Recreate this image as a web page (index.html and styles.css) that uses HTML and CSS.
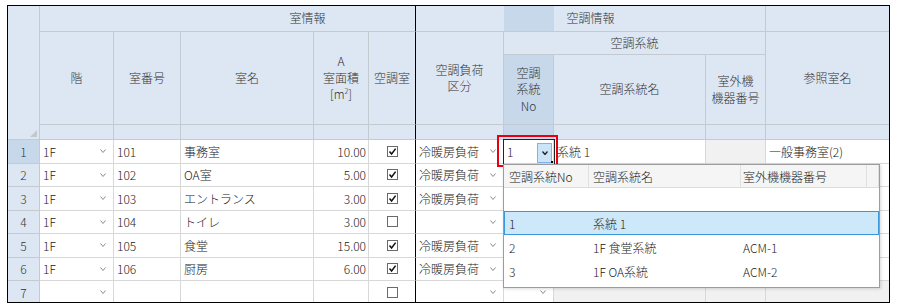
FILE: index.html
```html
<!DOCTYPE html>
<html lang="ja">
<head>
  <meta charset="UTF-8">
  <title>室情報 / 空調情報</title>
  <link rel="stylesheet" href="styles.css">
</head>
<body>
<div class="sheet">
  <div class="grid">
    <!-- header band -->
    <div class="h h-corner"></div>
    <div class="h h-room">室情報</div>
    <div class="h h-ac">空調情報</div>
    <div class="h h-reftop"></div>

    <div class="h h-floor">階</div>
    <div class="h h-no">室番号</div>
    <div class="h h-name">室名</div>
    <div class="h h-area"><span>A<br>室面積<br>[m<sup>2</sup>]</span></div>
    <div class="h h-aircon">空調室</div>
    <div class="h h-load"><span>空調負荷<br>区分</span></div>
    <div class="h h-sys">空調系統</div>
    <div class="h h-ref">参照室名</div>
    <div class="h h-sysno"><span>空調<br>系統<br>No</span></div>
    <div class="h h-sysname">空調系統名</div>
    <div class="h h-outdoor"><span>室外機<br>機器番号</span></div>

    <!-- filter row -->
    <div class="h f"></div>
    <div class="h f"></div>
    <div class="h f"></div>
    <div class="h f"></div>
    <div class="h f bk"></div>
    <div class="h f"></div>
    <div class="h f sel"></div>
    <div class="h f"></div>
    <div class="h f"></div>
    <div class="h f last"></div>

    <!-- rows -->
    <div class="row">
      <div class="c rh cur">1</div>
      <div class="c dd">1F<svg class="chev" viewBox="0 0 6 4"><path d="M.5.5 3 3.5 5.5.5"/></svg></div>
      <div class="c">101</div>
      <div class="c">事務室</div>
      <div class="c num">10.00</div>
      <div class="c chk"><svg class="box" viewBox="0 0 11 11"><rect x=".5" y=".5" width="10" height="10"/><path d="M2.5 5.5 4.6 8 8.6 2.6"/></svg></div>
      <div class="c dd">冷暖房負荷<svg class="chev" viewBox="0 0 6 4"><path d="M.5.5 3 3.5 5.5.5"/></svg></div>
      <div class="c edit">1<span class="drop-btn"><svg viewBox="0 0 6 4"><path d="M.5.5 3 3.5 5.5.5"/></svg></span></div>
      <div class="c">系統 1</div>
      <div class="c ro"></div>
      <div class="c">一般事務室(2)</div>
    </div>
    <div class="row">
      <div class="c rh">2</div>
      <div class="c dd">1F<svg class="chev" viewBox="0 0 6 4"><path d="M.5.5 3 3.5 5.5.5"/></svg></div>
      <div class="c">102</div>
      <div class="c">OA室</div>
      <div class="c num">5.00</div>
      <div class="c chk"><svg class="box" viewBox="0 0 11 11"><rect x=".5" y=".5" width="10" height="10"/><path d="M2.5 5.5 4.6 8 8.6 2.6"/></svg></div>
      <div class="c dd">冷暖房負荷<svg class="chev" viewBox="0 0 6 4"><path d="M.5.5 3 3.5 5.5.5"/></svg></div>
      <div class="c"></div>
      <div class="c"></div>
      <div class="c ro"></div>
      <div class="c"></div>
    </div>
    <div class="row">
      <div class="c rh">3</div>
      <div class="c dd">1F<svg class="chev" viewBox="0 0 6 4"><path d="M.5.5 3 3.5 5.5.5"/></svg></div>
      <div class="c">103</div>
      <div class="c">エントランス</div>
      <div class="c num">3.00</div>
      <div class="c chk"><svg class="box" viewBox="0 0 11 11"><rect x=".5" y=".5" width="10" height="10"/><path d="M2.5 5.5 4.6 8 8.6 2.6"/></svg></div>
      <div class="c dd">冷暖房負荷<svg class="chev" viewBox="0 0 6 4"><path d="M.5.5 3 3.5 5.5.5"/></svg></div>
      <div class="c"></div>
      <div class="c"></div>
      <div class="c ro"></div>
      <div class="c"></div>
    </div>
    <div class="row">
      <div class="c rh">4</div>
      <div class="c dd">1F<svg class="chev" viewBox="0 0 6 4"><path d="M.5.5 3 3.5 5.5.5"/></svg></div>
      <div class="c">104</div>
      <div class="c">トイレ</div>
      <div class="c num">3.00</div>
      <div class="c chk"><svg class="box" viewBox="0 0 11 11"><rect x=".5" y=".5" width="10" height="10"/></svg></div>
      <div class="c dd"><span></span><svg class="chev" viewBox="0 0 6 4"><path d="M.5.5 3 3.5 5.5.5"/></svg></div>
      <div class="c"></div>
      <div class="c"></div>
      <div class="c ro"></div>
      <div class="c"></div>
    </div>
    <div class="row">
      <div class="c rh">5</div>
      <div class="c dd">1F<svg class="chev" viewBox="0 0 6 4"><path d="M.5.5 3 3.5 5.5.5"/></svg></div>
      <div class="c">105</div>
      <div class="c">食堂</div>
      <div class="c num">15.00</div>
      <div class="c chk"><svg class="box" viewBox="0 0 11 11"><rect x=".5" y=".5" width="10" height="10"/><path d="M2.5 5.5 4.6 8 8.6 2.6"/></svg></div>
      <div class="c dd">冷暖房負荷<svg class="chev" viewBox="0 0 6 4"><path d="M.5.5 3 3.5 5.5.5"/></svg></div>
      <div class="c"></div>
      <div class="c"></div>
      <div class="c ro"></div>
      <div class="c"></div>
    </div>
    <div class="row">
      <div class="c rh">6</div>
      <div class="c dd">1F<svg class="chev" viewBox="0 0 6 4"><path d="M.5.5 3 3.5 5.5.5"/></svg></div>
      <div class="c">106</div>
      <div class="c">厨房</div>
      <div class="c num">6.00</div>
      <div class="c chk"><svg class="box" viewBox="0 0 11 11"><rect x=".5" y=".5" width="10" height="10"/><path d="M2.5 5.5 4.6 8 8.6 2.6"/></svg></div>
      <div class="c dd">冷暖房負荷<svg class="chev" viewBox="0 0 6 4"><path d="M.5.5 3 3.5 5.5.5"/></svg></div>
      <div class="c"></div>
      <div class="c"></div>
      <div class="c ro"></div>
      <div class="c"></div>
    </div>
    <div class="row">
      <div class="c rh">7</div>
      <div class="c dd"><span></span><svg class="chev" viewBox="0 0 6 4"><path d="M.5.5 3 3.5 5.5.5"/></svg></div>
      <div class="c"></div>
      <div class="c"></div>
      <div class="c num"></div>
      <div class="c chk"><svg class="box" viewBox="0 0 11 11"><rect x=".5" y=".5" width="10" height="10"/></svg></div>
      <div class="c dd"><span></span><svg class="chev" viewBox="0 0 6 4"><path d="M.5.5 3 3.5 5.5.5"/></svg></div>
      <div class="c dd"><span></span><svg class="chev" viewBox="0 0 6 4"><path d="M.5.5 3 3.5 5.5.5"/></svg></div>
      <div class="c ro"></div>
      <div class="c ro"></div>
      <div class="c ro"></div>
    </div>
  </div>

  <!-- red marker round the edited cell -->
  <div class="mark"></div>

  <!-- open dropdown of 空調系統No -->
  <div class="popup">
    <div class="pop-row pop-head"><span>空調系統No</span><span>空調系統名</span><span>室外機機器番号</span><span></span></div>
    <div class="pop-row blank"><span></span><span></span><span></span><span></span></div>
    <div class="pop-row active"><span>1</span><span>系統 1</span><span></span><span></span></div>
    <div class="pop-row"><span>2</span><span>1F 食堂系統</span><span>ACM-1</span><span></span></div>
    <div class="pop-row"><span>3</span><span>1F OA系統</span><span>ACM-2</span><span></span></div>
  </div>
</div>
</body>
</html>
```

FILE: styles.css
```css
:root {
  --hdr: #dde7f3;
  --hdr-sel: #c8d8eb;
  --hdr-line: #c4cad2;
  --line: #d8d8d8;
  --ro: #f1f1f1;
  --font: "Noto Sans CJK JP", "Noto Sans", sans-serif;
}
* {box-sizing: border-box; margin: 0; padding: 0;}
body {
  font-family: var(--font);
  font-size: 12px;
  font-weight: 300;
  color: #222;
  background: #fff;
}

/* sheet frame */
.sheet {
  position: relative;
  width: 883px;
  height: 298px;
  margin: 5px 0 0 7px;
  border: 1px solid #000;
  overflow: hidden;
}
.grid {
  display: grid;
  grid-template-columns: 32px 74px 67px 133px 55px 47px 88px 50px 152px 60px 123px;
  grid-template-rows: 26px 23px 70px 15px;
  grid-auto-rows: 23.5px;
}

/* header cells */
.h {
  background: var(--hdr);
  border-right: 1px solid var(--hdr-line);
  border-bottom: 1px solid var(--hdr-line);
  display: flex;
  align-items: center;
  justify-content: center;
  text-align: center;
  line-height: 16.5px;
  color: #333;
}
.h sup {font-size: 7px; line-height: 0; vertical-align: 5px;}
.h-corner {grid-column: 1; grid-row: 1 / 5; align-items: flex-end; justify-content: flex-end; padding: 0 2px 2px 0;}
.h-corner::after {
  content: "";
  border-style: solid;
  border-width: 0 0 7px 7px;
  border-color: transparent transparent #c3c8ce transparent;
}
.h-room {grid-column: 2 / 7; grid-row: 1; padding-left: 160px; border-right-color: #000;}
.h-ac {
  grid-column: 7 / 11; grid-row: 1;
  background: linear-gradient(to right, var(--hdr) 88px, var(--hdr-sel) 88px 138px, var(--hdr) 138px);
}
.h-reftop {grid-column: 11; grid-row: 1; border-right: none;}
.h-floor {grid-column: 2; grid-row: 2 / 4;}
.h-no {grid-column: 3; grid-row: 2 / 4;}
.h-name {grid-column: 4; grid-row: 2 / 4;}
.h-area {grid-column: 5; grid-row: 2 / 4;}
.h-aircon {grid-column: 6; grid-row: 2 / 4; border-right-color: #000;}
.h-load {grid-column: 7; grid-row: 2 / 4;}
.h-sys {grid-column: 8 / 11; grid-row: 2;}
.h-ref {grid-column: 11; grid-row: 2 / 4; border-right: none;}
.h-sysno {grid-column: 8; grid-row: 3; background: var(--hdr-sel);}
.h-sysname {grid-column: 9; grid-row: 3;}
.h-outdoor {grid-column: 10; grid-row: 3;}
.f {grid-row: 4;}
.f.sel {background: var(--hdr-sel);}
.f.bk {border-right-color: #000;}
.f.last {border-right: none;}

/* body cells */
.row {display: contents;}
.c {
  border-right: 1px solid var(--line);
  border-bottom: 1px solid var(--line);
  display: flex;
  align-items: center;
  padding: 0 3px;
  white-space: nowrap;
  overflow: hidden;
}
.row > .c:nth-child(6) {border-right-color: #000;}
.row > .c:last-child {border-right: none;}
.rh {background: var(--hdr); justify-content: center; border-color: var(--hdr-line); color: #333;}
.rh.cur {background: var(--hdr-sel);}
.num {justify-content: flex-end; padding-right: 2px;}
.chk {justify-content: center;}
.dd {justify-content: space-between; padding-right: 7px;}
.ro {background: var(--ro);}

.chev {width: 6px; height: 4px; fill: none; stroke: #8a8a8a; stroke-width: 1;}
.box {width: 11px; height: 11px;}
.box rect {fill: #fff; stroke: #6a6a6a;}
.box path {fill: none; stroke: #111; stroke-width: 1.5;}

/* active editor */
.edit {
  position: relative;
  outline: 1px solid #222;
  padding: 0 1px 0 3px;
}
.edit::after {
  content: "";
  position: absolute;
  right: -1px; bottom: -1px;
  width: 3px; height: 3px;
  background: #000;
}
.drop-btn {
  margin-left: auto;
  align-self: flex-end;
  width: 15px; height: 20px;
  background: #cce4f7;
  border: 1px solid #7eb4ea;
  display: flex; align-items: center; justify-content: center;
}
.drop-btn svg {width: 6px; height: 4px; fill: none; stroke: #222; stroke-width: 1.3;}

.mark {
  position: absolute;
  left: 489px; top: 129px;
  width: 61px; height: 32px;
  border: 2px solid #e60012;
}

/* dropdown list */
.popup {
  position: absolute;
  left: 495px; top: 158px;
  width: 377px; height: 124px;
  background: #fff;
  border: 1px solid #9c9c9c;
  box-shadow: 1px 1px 3px rgba(0, 0, 0, .15);
}
.pop-row {
  display: grid;
  grid-template-columns: 85px 152px 126px 1fr;
  height: 24px;
  align-items: center;
}
.pop-row span {padding-left: 4px; white-space: nowrap;}
.pop-row span:first-child {padding-left: 5px;}
.pop-head {height: 23px; background: #f5f5f5; border-bottom: 1px solid #dcdcdc; align-items: stretch;}
.pop-head span {border-right: 1px solid #e0e0e0; display: flex; align-items: center;}
.pop-head span:nth-child(3) {padding-left: 2px;}
.pop-row span:nth-child(3) {padding-left: 2px;}
.blank {height: 23px;}
.active {background: #cde8f8; outline: 1px solid #3b98dc; outline-offset: -1px;}
```
